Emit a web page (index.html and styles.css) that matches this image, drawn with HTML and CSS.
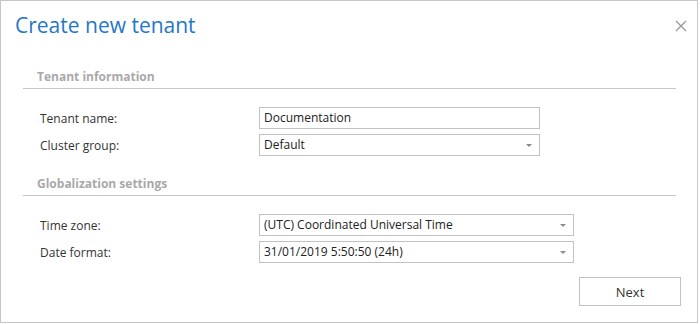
FILE: index.html
```html
<!DOCTYPE html>
<html lang="en">
<head>
  <meta charset="UTF-8">
  <title>Create new tenant</title>
  <link rel="stylesheet" href="styles.css">
</head>
<body>

  <div class="dialog">
    <div class="dialog-header">
      <h1>Create new tenant</h1>
      <span class="close">
        <svg width="12" height="12" viewBox="0 0 12 12"><path d="M1 1 L11 11 M11 1 L1 11" stroke="#9a9a9a" stroke-width="1.4" fill="none"/></svg>
      </span>
    </div>

    <div class="section">
      <h2>Tenant information</h2>
      <div class="row">
        <label>Tenant name:</label>
        <div class="field narrow">Documentation</div>
      </div>
      <div class="row">
        <label>Cluster group:</label>
        <div class="field narrow select">Default<span class="arrow"></span></div>
      </div>
    </div>

    <div class="section second">
      <h2>Globalization settings</h2>
      <div class="row">
        <label>Time zone:</label>
        <div class="field wide select">(UTC) Coordinated Universal Time<span class="arrow"></span></div>
      </div>
      <div class="row">
        <label>Date format:</label>
        <div class="field wide select">31/01/2019 5:50:50 (24h)<span class="arrow"></span></div>
      </div>
    </div>

    <div class="footer">
      <button>Next</button>
    </div>
  </div>

</body>
</html>
```

FILE: styles.css
```css
* {
  margin: 0;
  padding: 0;
  box-sizing: border-box;
}

body {
  font-family: "Open Sans", "Noto Sans", sans-serif;
  font-size: 12px;
  color: #333;
  background: #fff;
}

.dialog {
  width: 698px;
  height: 323px;
  border: 1px solid #c6c6c6;
  display: flex;
  flex-direction: column;
}

.dialog-header {
  display: flex;
  justify-content: space-between;
  padding: 10px 10px 0 14px;
  height: 68px;
}

h1 {
  font-size: 21px;
  font-weight: 400;
  color: #2577c8;
  line-height: 28px;
}

.close {
  margin-top: 8px;
  width: 12px;
  height: 12px;
}

.section {
  margin: 0 21px 0 22px;
}

.section.second {
  margin-top: 15px;
}

h2 {
  font-size: 12px;
  font-weight: 700;
  color: #a9a9a9;
  padding: 0 0 3px 14px;
  border-bottom: 1px solid #c8c8c8;
  margin-bottom: 18px;
  line-height: 16px;
}

.row {
  display: flex;
  align-items: center;
  padding-left: 17px;
  margin-bottom: 5px;
}

.row label {
  width: 219px;
  color: #333;
}

.field {
  height: 22px;
  line-height: 20px;
  border: 1px solid #c2c2c2;
  padding-left: 4px;
  color: #222;
  position: relative;
}

.narrow {
  width: 281px;
}

.wide {
  width: 315px;
}

.arrow {
  position: absolute;
  right: 7px;
  top: 9px;
  border-left: 3px solid transparent;
  border-right: 3px solid transparent;
  border-top: 3px solid #8a8a8a;
}

.footer {
  display: flex;
  justify-content: flex-end;
  padding: 9px 16px 0 0;
}

button {
  width: 102px;
  height: 29px;
  background: #fff;
  border: 1px solid #c2c2c2;
  font-family: inherit;
  font-size: 13px;
  color: #333;
}
```
